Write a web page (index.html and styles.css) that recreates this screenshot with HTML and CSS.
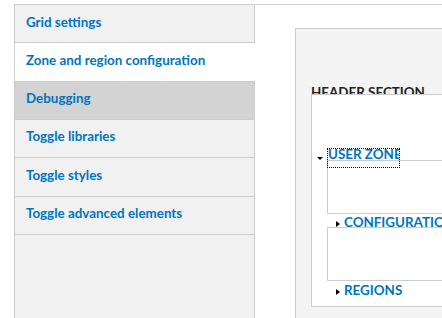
FILE: index.html
```
<!DOCTYPE html>
<html>
<head>
<meta charset="utf-8">
<link rel="stylesheet" href="styles.css">
</head>
<body>
<div class="vtabs">
  <ul class="tabs">
    <li class="tab"><a class="tab-link">Grid settings</a></li>
    <li class="tab active"><a class="tab-link">Zone and region configuration</a></li>
    <li class="tab hover"><a class="tab-link">Debugging</a></li>
    <li class="tab"><a class="tab-link">Toggle libraries</a></li>
    <li class="tab"><a class="tab-link">Toggle styles</a></li>
    <li class="tab"><a class="tab-link">Toggle advanced elements</a></li>
  </ul>
  <div class="pane">
    <div class="fieldset">
      <div class="legend"><span class="legend-text">HEADER SECTION</span></div>
      <div class="section">
        <div class="summary first">
          <span class="tri-down"></span>
          <span class="focus"><span class="focus-text">USER ZONE</span></span>
        </div>
        <div class="zone-box"></div>
        <div class="summary">
          <span class="tri-right"></span>
          <span class="sum-text">CONFIGURATION</span>
        </div>
        <div class="zone-box"></div>
        <div class="summary last">
          <span class="tri-right"></span>
          <span class="sum-text">REGIONS</span>
        </div>
      </div>
    </div>
  </div>
</div>
</body>
</html>
```
FILE: styles.css
```
html, body {
  margin: 0;
  padding: 0;
  overflow: hidden;
  background: #fff;
  font-family: Lato, "Open Sans", sans-serif;
  font-size: 13.4px;
}
.vtabs {
  display: flex;
  margin: 4px 0 0 14px;
  height: 314px;
  width: 700px;
}
.tabs {
  list-style: none;
  margin: 0;
  padding: 0;
  width: 241px;
  box-sizing: border-box;
  flex: none;
  background: #f1f1f1;
  border: 1px solid #ccc;
  border-bottom: none;
}
.tab {
  height: 38.33px;
  box-sizing: border-box;
  padding: 8.5px 11px 0;
  border-bottom: 1px solid #ccc;
  line-height: 16px;
}
.tab.active {
  background: #fff;
  margin-right: -1px;
}
.tab.hover {
  background: #d3d3d3;
}
.tab-link {
  color: #0074bd;
  font-weight: bold;
  text-decoration: none;
}
.pane {
  flex: 1;
  border-top: 1px solid #ccc;
  background: #fff;
  padding: 23px 0 0 40px;
}
.fieldset {
  border: 1px solid #ccc;
  background: #f4f4f4;
  padding: 0 0 20px 15px;
}
.legend {
  margin-top: 55px;
  height: 10px;
  overflow: hidden;
  line-height: 16px;
  font-weight: bold;
  color: #222;
  white-space: nowrap;
}
.section {
  background: #fff;
  border: 1px solid #ccc;
  padding: 54px 0 8px 0;
}
.summary {
  display: flex;
  align-items: flex-start;
  height: 13px;
  overflow: hidden;
  line-height: 16px;
  font-weight: bold;
  color: #0074bd;
}
.summary.first {
  height: 18px;
  overflow: visible;
  margin-bottom: -7px;
}
.summary.last {
  height: 17px;
  padding-top: 1px;
  box-sizing: border-box;
}
.tri-down {
  width: 0;
  height: 0;
  margin: 8px 5px 0 5px;
  border-left: 3px solid transparent;
  border-right: 3px solid transparent;
  border-top: 3px solid #000;
}
.tri-right {
  width: 0;
  height: 0;
  margin: 7px 4px 0 24px;
  border-top: 3px solid transparent;
  border-bottom: 3px solid transparent;
  border-left: 4px solid #000;
}
.focus {
  display: block;
  height: 18px;
  width: 71px;
  outline: 1px dotted #000;
}
.focus-text {
  display: block;
  height: 10px;
  overflow: hidden;
  line-height: 11px;
  white-space: nowrap;
}
.sum-text {
  white-space: nowrap;
}
.zone-box {
  margin-left: 15px;
  height: 54px;
  box-sizing: border-box;
  border: 1px solid #ccc;
  background: #fff;
}
```
